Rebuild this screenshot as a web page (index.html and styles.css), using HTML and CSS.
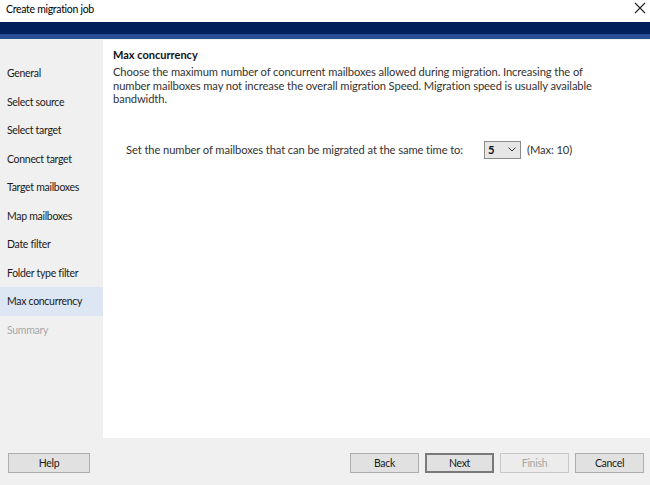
FILE: index.html
```html
<!DOCTYPE html>
<html>
<head>
<meta charset="utf-8">
<link rel="stylesheet" href="styles.css">
</head>
<body>
<div class="window">
  <div class="titlebar">
    <span class="title">Create migration job</span>
    <svg class="close" width="12" height="12" viewBox="0 0 12 12"><path d="M1 1L11 11M11 1L1 11" stroke="#222" stroke-width="1.1" fill="none"/></svg>
  </div>
  <div class="banner"></div>
  <div class="body">
    <ul class="nav">
      <li>General</li>
      <li>Select source</li>
      <li>Select target</li>
      <li>Connect target</li>
      <li>Target mailboxes</li>
      <li>Map mailboxes</li>
      <li>Date filter</li>
      <li>Folder type filter</li>
      <li class="active">Max concurrency</li>
      <li class="disabled">Summary</li>
    </ul>
    <div class="content">
      <h1 class="heading">Max concurrency</h1>
      <p class="desc">Choose the maximum number of concurrent mailboxes allowed during migration. Increasing the of number mailboxes may not increase the overall migration Speed. Migration speed is usually available bandwidth.</p>
      <div class="setting">
        <span class="label">Set the number of mailboxes that can be migrated at the same time to:</span>
        <div class="select">
          <span class="value">5</span>
          <svg class="chev" width="8" height="5" viewBox="0 0 8 5"><path d="M0.5 0.5L4 4L7.5 0.5" stroke="#333" stroke-width="1" fill="none"/></svg>
        </div>
        <span class="max">(Max: 10)</span>
      </div>
    </div>
  </div>
  <div class="footer">
    <button class="btn">Help</button>
    <div class="actions">
      <button class="btn">Back</button>
      <button class="btn primary">Next</button>
      <button class="btn disabled">Finish</button>
      <button class="btn">Cancel</button>
    </div>
  </div>
</div>
</body>
</html>
```
FILE: styles.css
```css
html, body {
  margin: 0;
  padding: 0;
}
body {
  font-family: Lato, "Noto Sans", sans-serif;
  font-size: 11.2px;
  letter-spacing: -0.1px;
  color: #1a1a1a;
  background: #f0f0f0;
}
.window {
  width: 650px;
  height: 485px;
  display: flex;
  flex-direction: column;
  overflow: hidden;
}
.titlebar {
  height: 22px;
  background: #fff;
  display: flex;
  align-items: center;
  justify-content: space-between;
  padding: 0 4px 0 6px;
  box-sizing: border-box;
}
.title {
  font-size: 10.5px;
  letter-spacing: -0.3px;
  color: #000;
  position: relative;
  top: -2px;
}
.close {
  position: relative;
  top: -3px;
}
.banner {
  height: 12px;
  background: #001f5b;
  border-bottom: 5px solid #2a4e96;
}
.body {
  display: flex;
  height: 398px;
  margin-top: 1px;
}
.nav {
  list-style: none;
  margin: 0;
  padding: 19px 0 0 0;
  width: 103px;
  background: #f0f0f0;
}
.nav li {
  height: 28.5px;
  line-height: 28.5px;
  padding-left: 7px;
  font-size: 10.5px;
  letter-spacing: -0.3px;
  color: #1a1a1a;
  white-space: nowrap;
}
.nav li.active {
  background: #dde6f3;
}
.nav li.disabled {
  color: #a8a8a8;
}
.content {
  flex: 1;
  background: #fff;
  padding: 7px 10px 0 10px;
}
.heading {
  margin: 0;
  font-size: 11px;
  font-weight: bold;
  line-height: 16px;
  letter-spacing: 0;
  color: #111;
}
.desc {
  margin: 2px 0 0 0;
  line-height: 13.5px;
  color: #333;
  width: 490px;
}
.setting {
  display: flex;
  align-items: center;
  margin-top: 35px;
  padding-left: 13px;
}
.label {
  color: #333;
  width: 358px;
  white-space: nowrap;
}
.select {
  width: 37px;
  height: 18px;
  box-sizing: border-box;
  border: 1px solid #8a8a8a;
  background: #e6e6e6;
  display: flex;
  align-items: center;
  justify-content: space-between;
  padding: 0 4px 0 3px;
}
.value {
  font-weight: bold;
  color: #111;
}
.max {
  margin-left: 6px;
  color: #333;
}
.footer {
  flex: 1;
  display: flex;
  justify-content: space-between;
  align-items: flex-start;
  padding: 15px 6px 0 8px;
}
.actions {
  display: flex;
  gap: 6px;
}
.btn {
  width: 69px;
  height: 20px;
  font-family: inherit;
  font-size: 10.5px;
  letter-spacing: -0.3px;
  color: #1a1a1a;
  background: #e1e1e1;
  border: 1px solid #adadad;
  padding: 0;
  margin: 0;
}
.footer > .btn {
  width: 82px;
}
.btn.primary {
  border: 2px solid #7a7a7a;
}
.btn.disabled {
  color: #a6a6a6;
  background: #ececec;
  border-color: #c8c8c8;
}
```
